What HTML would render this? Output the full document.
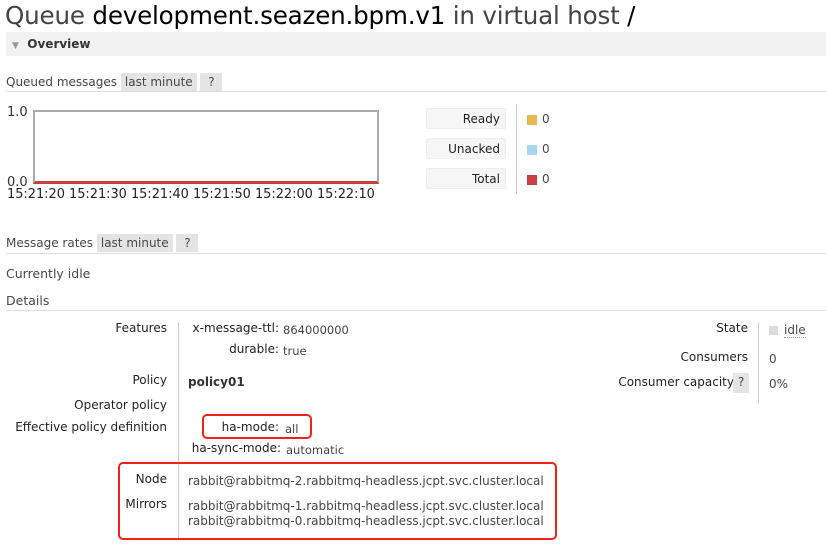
<!DOCTYPE html>
<html><head><meta charset="utf-8"><style>
*{margin:0;padding:0;box-sizing:border-box}
body{width:826px;height:556px;background:#fff;font-family:"DejaVu Sans","Liberation Sans",sans-serif;font-size:12px;color:#484848;position:relative;overflow:hidden}
.a{position:absolute;white-space:nowrap}
.r{text-align:right}
.tab{background:#e4e4e4;padding:2px 4px}
.hr{position:absolute;left:6px;right:0;height:1px;background:#ddd}
.lbl{position:absolute;background:#f6f6f6;border:1px solid #eee;border-radius:2px;width:80px;height:21px;text-align:right;padding:3px 5px;color:#222}
.k{color:#222}
.v{color:#444;font-size:11.5px}
.u{color:#444;font-size:12px}
.box{position:absolute;border:2.5px solid #f5201a;border-radius:5px}
</style></head><body>
<div class="a" style="left:5px;top:1px;font-size:24.6px;color:#444;letter-spacing:-0.2px">Queue <span style="color:#000">development.seazen.bpm.v1</span> in virtual host <span style="color:#000">/</span></div>
<div class="a" style="left:6px;top:32px;width:820px;height:24px;background:#f2f2f2"></div>
<div class="a" style="left:12px;top:37px;font-weight:bold;color:#333;font-size:12px"><span style="color:#999;font-size:9px">▼</span>&nbsp; Overview</div>

<div class="a" style="left:6px;top:75px;font-size:12px"><span style="color:#444">Queued messages</span> <span class="tab">last minute</span> <span class="tab">&nbsp;?&nbsp;</span></div>
<div class="hr" style="top:91px;left:6px"></div>

<div class="a" style="left:7px;top:105px;color:#333;font-size:13px">1.0</div>
<div class="a" style="left:7px;top:175px;color:#333;font-size:13px">0.0</div>
<div class="a" style="left:33px;top:110px;width:346px;height:74px;border:2px solid #aaa;border-bottom:3px solid #c94040"></div>
<div class="a" style="left:7px;top:187px;color:#222;font-size:12.9px">15:21:20 15:21:30 15:21:40 15:21:50 15:22:00 15:22:10</div>

<div class="lbl" style="left:426px;top:108px">Ready</div>
<div class="lbl" style="left:426px;top:138px">Unacked</div>
<div class="lbl" style="left:426px;top:168px">Total</div>
<div class="a" style="left:516px;top:104px;width:1px;height:90px;background:#ccc"></div>
<div class="a" style="left:527px;top:115px;width:10px;height:10px;background:#e8b84b"></div><div class="a" style="left:542px;top:112px">0</div>
<div class="a" style="left:527px;top:145px;width:10px;height:10px;background:#aad4f5"></div><div class="a" style="left:542px;top:142px">0</div>
<div class="a" style="left:527px;top:175px;width:10px;height:10px;background:#c94040"></div><div class="a" style="left:542px;top:172px">0</div>

<div class="hr" style="top:253px"></div>
<div class="a" style="left:6px;top:236px;font-size:12px">Message rates <span class="tab">last minute</span> <span class="tab">&nbsp;?&nbsp;</span></div>
<div class="a" style="left:6px;top:266px;font-size:12.5px">Currently idle</div>
<div class="a" style="left:6px;top:293px;font-size:12.5px">Details</div>
<div class="hr" style="top:310px"></div>

<div class="a r k" style="right:659px;top:321px">Features</div>
<div class="a r k" style="right:659px;top:373px">Policy</div>
<div class="a r k" style="right:659px;top:398px">Operator policy</div>
<div class="a r k" style="right:659px;top:420px">Effective policy definition</div>
<div class="a r k" style="right:659px;top:472px">Node</div>
<div class="a r k" style="right:659px;top:497px">Mirrors</div>
<div class="a" style="left:178px;top:322px;width:1px;height:218px;background:#ccc"></div>

<div class="a r k" style="right:547px;top:321px">x-message-ttl:</div><div class="a v" style="left:283px;top:323px">864000000</div>
<div class="a r k" style="right:547px;top:342px">durable:</div><div class="a v" style="left:283px;top:344px">true</div>
<div class="a" style="left:188px;top:375px;font-weight:bold;color:#333">policy01</div>
<div class="a r k" style="right:547px;top:420px">ha-mode:</div><div class="a v" style="left:285px;top:422px">all</div>
<div class="a r k" style="right:545px;top:441px">ha-sync-mode:</div><div class="a v" style="left:286px;top:443px">automatic</div>
<div class="a u" style="left:188px;top:474px">rabbit@rabbitmq-2.rabbitmq-headless.jcpt.svc.cluster.local</div>
<div class="a u" style="left:188px;top:499px">rabbit@rabbitmq-1.rabbitmq-headless.jcpt.svc.cluster.local</div>
<div class="a u" style="left:188px;top:514px">rabbit@rabbitmq-0.rabbitmq-headless.jcpt.svc.cluster.local</div>

<div class="box" style="left:202px;top:414px;width:110px;height:25px"></div>
<div class="box" style="left:118px;top:462px;width:439px;height:78px"></div>

<div class="a r k" style="right:78px;top:321px">State</div>
<div class="a r k" style="right:78px;top:350px">Consumers</div>
<div class="a r k" style="right:92px;top:375px">Consumer capacity</div>
<div class="a tab" style="left:733px;top:373px;height:20px;padding:2px 5px">?</div>
<div class="a" style="left:758px;top:323px;width:1px;height:80px;background:#ccc"></div>
<div class="a" style="left:769px;top:326px;width:9px;height:9px;background:#ddd"></div>
<div class="a" style="left:784px;top:323px;border-bottom:1px dotted #999">idle</div>
<div class="a" style="left:769px;top:352px">0</div>
<div class="a" style="left:769px;top:377px">0%</div>
</body></html>
